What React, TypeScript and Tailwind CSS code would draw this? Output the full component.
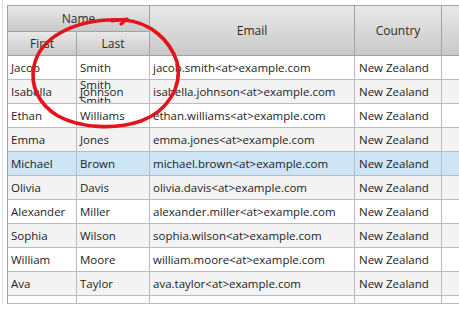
import React from "react";

const rows = [
  ["Jacob", "Smith", "jacob.smith<at>example.com"],
  ["Isabella", "Johnson", "isabella.johnson<at>example.com"],
  ["Ethan", "Williams", "ethan.williams<at>example.com"],
  ["Emma", "Jones", "emma.jones<at>example.com"],
  ["Michael", "Brown", "michael.brown<at>example.com"],
  ["Olivia", "Davis", "olivia.davis<at>example.com"],
  ["Alexander", "Miller", "alexander.miller<at>example.com"],
  ["Sophia", "Wilson", "sophia.wilson<at>example.com"],
  ["William", "Moore", "william.moore<at>example.com"],
  ["Ava", "Taylor", "ava.taylor<at>example.com"],
];

const hdr =
  "flex items-center justify-center border-r border-b border-[#a3a3a3] bg-gradient-to-b from-[#e9e9e9] to-[#c9c9c9] text-[#2b2b2b] text-[12px]";

export default function App() {
  return (
    <div
      className="relative w-[459px] h-[309px] bg-white overflow-hidden"
      style={{ fontFamily: '"Open Sans", "Noto Sans", sans-serif' }}
    >
      <div className="pl-[2px]">
        <div className="h-[304px] border-l border-[#dddddd] pl-[4px] pt-[5px]">
          <div className="w-[460px] border-l border-t border-[#a3a3a3] grid grid-cols-[69px_73px_205px_87px_1fr] grid-rows-[26px_24px_repeat(10,24px)_8px] text-[11.5px] leading-none">
            <div className={`${hdr} col-span-2`}>Name</div>
            <div className={`${hdr} row-span-2`}>Email</div>
            <div className={`${hdr} row-span-2`}>Country</div>
            <div className={`${hdr} row-span-2 border-r-0`}></div>
            <div className={hdr}>First</div>
            <div className={hdr}>Last</div>
            {rows.map((r, i) => {
              const bg =
                i === 4 ? "bg-[#cce4f6]" : i % 2 === 1 ? "bg-[#f3f3f3]" : "bg-white";
              const cell = `flex items-center pl-[3px] border-r border-b border-[#bcbcbc] text-[#1c1c1c] whitespace-nowrap overflow-hidden ${bg}`;
              return (
                <React.Fragment key={i}>
                  <div className={cell}>{r[0]}</div>
                  <div className={`${cell} relative`}>
                    {i === 1 ? (
                      <>
                        <span className="absolute left-[3px] top-[-1px]">Smith</span>
                        <span className="relative">Johnson</span>
                        <span className="absolute left-[3px] top-[15px]">Smith</span>
                      </>
                    ) : (
                      r[1]
                    )}
                  </div>
                  <div className={cell}>{r[2]}</div>
                  <div className={`${cell} pl-[4px]`}>New Zealand</div>
                  <div className={`${cell} border-r-0`}></div>
                </React.Fragment>
              );
            })}
            <div className="border-r border-b border-[#bcbcbc]"></div>
            <div className="border-r border-b border-[#bcbcbc]"></div>
            <div className="border-r border-b border-[#bcbcbc]"></div>
            <div className="border-r border-b border-[#bcbcbc]"></div>
            <div className="border-b border-[#bcbcbc]"></div>
          </div>
        </div>
      </div>
      <svg
        className="absolute left-0 top-0 pointer-events-none"
        width="459"
        height="309"
        viewBox="0 0 459 309"
      >
        <path
          d="M 60 33 C 78 23, 102 19, 124 20 C 150 22, 170 40, 177 62 C 183 88, 166 112, 141 121 C 115 130, 80 128, 58 116 C 38 104, 30 85, 34 66 C 37 52, 46 41, 60 33"
          fill="none"
          stroke="#e3141c"
          strokeWidth="3.6"
          strokeLinecap="round"
        />
        <path
          d="M 112 21 L 127 19 L 121 24"
          fill="none"
          stroke="#e3141c"
          strokeWidth="3.2"
          strokeLinecap="round"
          strokeLinejoin="round"
        />
      </svg>
    </div>
  );
}
